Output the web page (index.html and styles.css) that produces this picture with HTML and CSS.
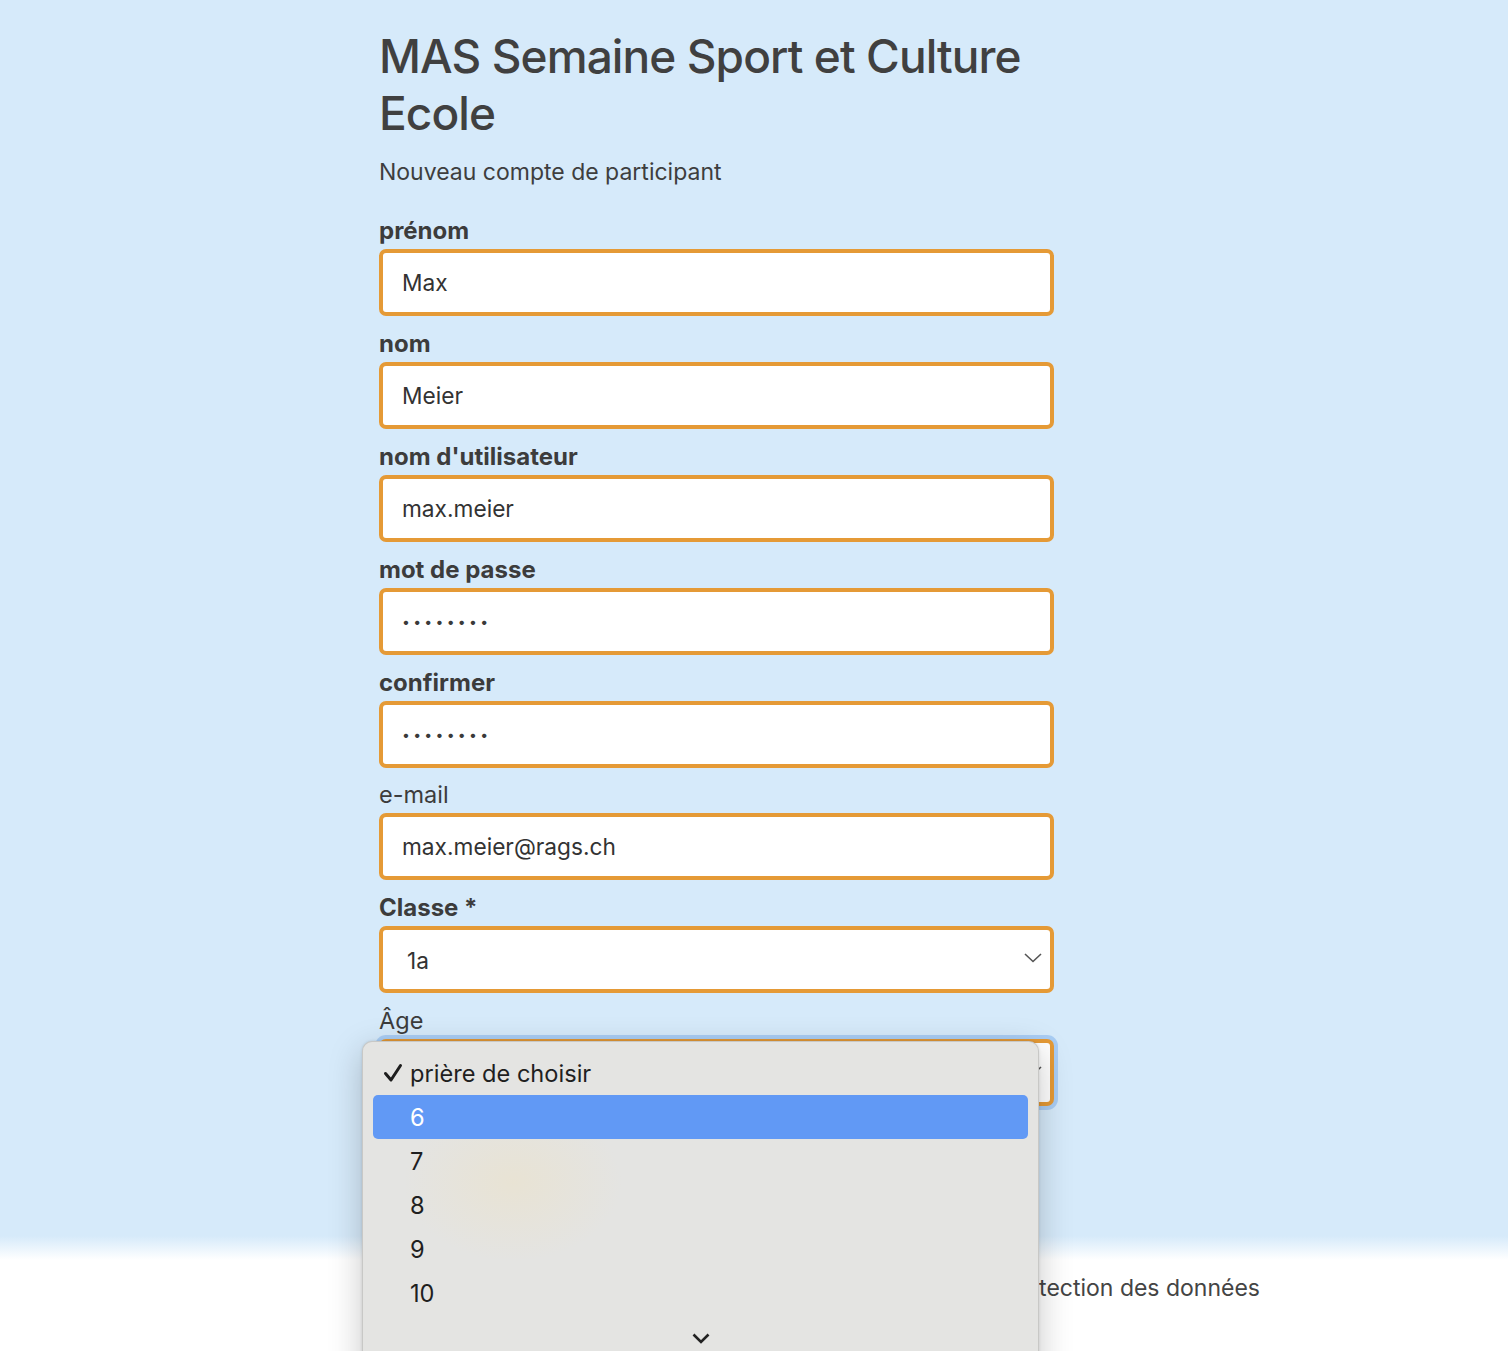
FILE: index.html
```html
<!DOCTYPE html>
<html lang="fr">
<head>
<meta charset="utf-8">
<title>MAS Semaine Sport et Culture Ecole</title>
<link rel="stylesheet" href="styles.css">
</head>
<body>
<main class="main">
  <div class="col">
    <h1 class="title">MAS Semaine Sport et Culture Ecole</h1>
    <p class="subtitle">Nouveau compte de participant</p>
    <form class="form">
      <div class="field">
        <label class="label bold">prénom</label>
        <input class="input" type="text" value="Max">
      </div>
      <div class="field">
        <label class="label bold">nom</label>
        <input class="input" type="text" value="Meier">
      </div>
      <div class="field">
        <label class="label bold">nom d'utilisateur</label>
        <input class="input" type="text" value="max.meier">
      </div>
      <div class="field">
        <label class="label bold">mot de passe</label>
        <div class="input pw">••••••••</div>
      </div>
      <div class="field">
        <label class="label bold">confirmer</label>
        <div class="input pw">••••••••</div>
      </div>
      <div class="field">
        <label class="label">e-mail</label>
        <input class="input" type="text" value="max.meier@rags.ch">
      </div>
      <div class="field">
        <label class="label bold">Classe *</label>
        <div class="input select">
          <span class="select-text">1a</span>
          <svg class="chev" width="18" height="10" viewBox="0 0 18 10"><path d="M1 1 L9 8.5 L17 1" fill="none" stroke="#555" stroke-width="1.6"/></svg>
        </div>
      </div>
      <div class="field">
        <label class="label">Âge</label>
        <div class="input select focus">
          <span class="select-text hidden-under">prière de choisir</span>
          <svg class="chev" width="18" height="10" viewBox="0 0 18 10"><path d="M1 1 L9 8.5 L17 1" fill="none" stroke="#555" stroke-width="1.6"/></svg>
        </div>
      </div>
    </form>
  </div>
</main>
<div class="fade"></div>
<footer class="footer">
  <span class="foot-link">Impressum</span>
  <span class="foot-link">Protection des données</span>
</footer>

<div class="popup">
  <div class="glow"></div>
  <div class="opt checked">
    <svg class="check" width="20" height="20" viewBox="0 0 20 20"><path d="M2.5 10.5 L8 17 L17.5 2.5" fill="none" stroke="#1e1e1e" stroke-width="3" stroke-linecap="round" stroke-linejoin="round"/></svg>
    <span>prière de choisir</span>
  </div>
  <div class="opt active">6</div>
  <div class="opt">7</div>
  <div class="opt">8</div>
  <div class="opt">9</div>
  <div class="opt">10</div>
  <div class="more">
    <svg width="18" height="11" viewBox="0 0 18 11"><path d="M1.5 1.5 L9 9 L16.5 1.5" fill="none" stroke="#222" stroke-width="2.6"/></svg>
  </div>
</div>
</body>
</html>
```

FILE: styles.css
```css
* { box-sizing: border-box; }
html, body { margin: 0; padding: 0; }
body {
  font-family: Inter, "Noto Sans", sans-serif;
  color: #424242;
  background: #fff;
  min-height: 1351px;
  overflow: hidden;
}
.main {
  background: #d6eafa;
  padding-top: 28px;
  height: 1236px;
}
.col {
  margin-left: 379px;
  width: 675px;
}
.title {
  margin: 0;
  font-size: 46px;
  line-height: 57px;
  font-weight: 500;
  color: #404040;
  letter-spacing: -0.9px;
  width: 700px;
}
.subtitle {
  margin: 15px 0 0;
  font-size: 23px;
  line-height: 30px;
  color: #3e3e3e;
}
.form {
  margin-top: 30px;
  display: flex;
  flex-direction: column;
  gap: 13.9px;
}
.field {
  display: flex;
  flex-direction: column;
  gap: 4px;
}
.label {
  font-size: 24px;
  line-height: 28px;
  color: #3c3c3c;
}
.label:not(.bold) { font-size: 23.5px; }
.bold { font-weight: 700; }
.input {
  height: 67px;
  width: 675px;
  border: 4px solid #e59a36;
  border-radius: 7px;
  background: #fff;
  padding: 0 19px;
  font-family: inherit;
  font-size: 22.7px;
  color: #333;
  outline: none;
  display: flex;
  align-items: center;
}
.pw {
  font-size: 14px;
  letter-spacing: 3.3px;
  color: #3a3a3a;
}
.select {
  justify-content: space-between;
  padding: 0 8px 0 24px;
}
.select-text { padding-top: 1px; }
.hidden-under { color: #333; }
.focus {
  box-shadow: 0 0 0 4px #a9cdf4;
}
.chev { display: block; margin-top: -3px; }
.fade {
  height: 24px;
  background: linear-gradient(to bottom, #d6eafa, #ffffff);
}
.footer {
  display: flex;
  justify-content: flex-end;
  gap: 40px;
  padding: 13px 248px 0 0;
  font-size: 23px;
  line-height: 30px;
  color: #444;
}
.popup {
  position: absolute;
  left: 362px;
  top: 1041px;
  width: 677px;
  height: 340px;
  background: #e4e4e2;
  border: 1px solid rgba(0,0,0,0.12);
  border-radius: 10px;
  box-shadow: 0 10px 34px rgba(0,0,0,0.22), 0 0 3px rgba(0,0,0,0.12);
  padding: 9px 10px 0;
  overflow: hidden;
}
.glow {
  position: absolute;
  left: 40px;
  top: 60px;
  width: 220px;
  height: 160px;
  background: radial-gradient(ellipse at center, rgba(236,226,200,0.55), rgba(228,228,226,0) 70%);
  pointer-events: none;
}
.opt {
  position: relative;
  height: 44px;
  display: flex;
  align-items: center;
  padding-left: 37px;
  font-size: 23.6px;
  color: #1f1f1f;
  border-radius: 5px;
}
.check {
  position: absolute;
  left: 10px;
  top: 12px;
}
.active {
  background: #6199f5;
  color: #fff;
}
.more {
  display: flex;
  justify-content: center;
  padding-top: 18px;
}
```
